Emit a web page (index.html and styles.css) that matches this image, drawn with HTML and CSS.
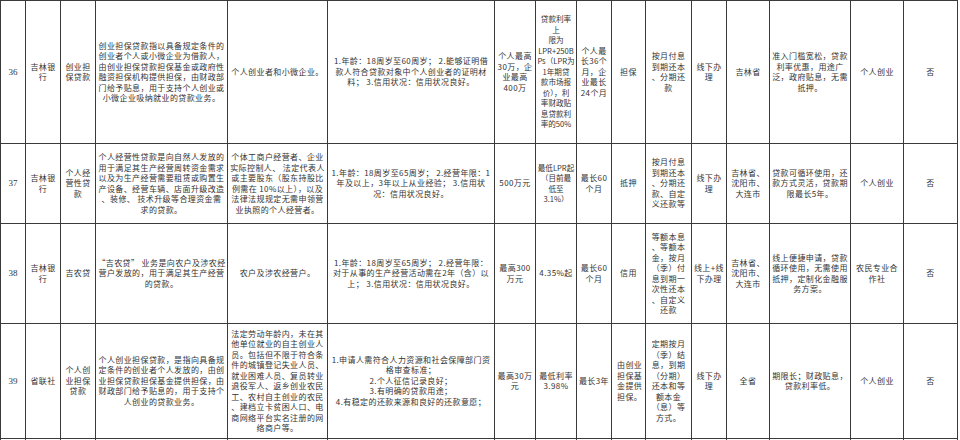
FILE: index.html
```html
<!DOCTYPE html>
<html lang="zh-CN">
<head>
<meta charset="utf-8">
<title>贷款产品表</title>
<link rel="stylesheet" href="styles.css">
</head>
<body>
<table class="loans">
<colgroup>
<col class="c1"><col class="c2"><col class="c3"><col class="c4"><col class="c5"><col class="c6"><col class="c7"><col class="c8"><col class="c9"><col class="c10"><col class="c11"><col class="c12"><col class="c13"><col class="c14"><col class="c15"><col class="c16">
</colgroup>
<tbody>
<tr class="r36">
<td class="num">36</td>
<td>吉林银<br>行</td>
<td>创业担<br>保贷款</td>
<td>创业担保贷款指以具备规定条件的<br>创业者个人或小微企业为借款人，<br>由创业担保贷款担保基金或政府性<br>融资担保机构提供担保，由财政部<br>门给予贴息，用于支持个人创业或<br>小微企业吸纳就业的贷款业务。</td>
<td>个人创业者和小微企业。</td>
<td>1.年龄：18周岁至60周岁； 2.能够证明借<br>款人符合贷款对象中个人创业者的证明材<br>料； 3.信用状况：信用状况良好。</td>
<td>个人最高<br>30万，企<br>业最高<br>400万</td>
<td class="tight">贷款利率<br>上<br>限为<br>LPR+250B<br>Ps（LPR为<br>1年期贷<br>款市场报<br>价），利<br>率财政贴<br>息贷款利<br>率的50%</td>
<td>个人最<br>长36个<br>月，企<br>业最长<br>24个月</td>
<td>担保</td>
<td>按月付息<br>到期还本<br>、分期还<br>款</td>
<td>线下办<br>理</td>
<td>吉林省</td>
<td>准入门槛宽松，贷款<br>利率优惠，用途广<br>泛，政府贴息，无需<br>抵押。</td>
<td>个人创业</td>
<td>否</td>
</tr>
<tr class="r37">
<td class="num">37</td>
<td>吉林银<br>行</td>
<td>个人经<br>营性贷<br>款</td>
<td>个人经营性贷款是向自然人发放的<br>用于满足其生产经营周转资金需求<br>以及为生产经营需要租赁或购置生<br>产设备、经营车辆、店面升级改造<br>、装修、 技术升级等合理资金需<br>求的贷款。</td>
<td>个体工商户经营者、企业<br>实际控制人、 法定代表人<br>或主要股东（股东持股比<br>例需在 10%以上），以及<br>法律法规规定无需申领营<br>业执照的个人经营者。</td>
<td>1.年龄：18周岁至65周岁； 2.经营年限：1<br>年及以上，3年以上从业经验； 3.信用状<br>况：信用状况良好。</td>
<td>500万元</td>
<td class="tight">最低LPR起<br>（目前最<br>低至<br>3.1%）</td>
<td>最长60<br>个月</td>
<td>抵押</td>
<td>按月付息<br>到期还本<br>、分期还<br>款、自定<br>义还款等</td>
<td>线下办<br>理</td>
<td>吉林省、<br>沈阳市、<br>大连市</td>
<td>贷款可循环使用，还<br>款方式灵活，贷款期<br>限最长5年。</td>
<td>个人创业</td>
<td>否</td>
</tr>
<tr class="r38">
<td class="num">38</td>
<td>吉林银<br>行</td>
<td>吉农贷</td>
<td>“吉农贷” 业务是向农户及涉农经<br>营户发放的，用于满足其生产经营<br>的贷款。</td>
<td>农户及涉农经营户。</td>
<td>1.年龄：18周岁至65周岁； 2.经营年限：<br>对于从事的生产经营活动需在2年（含）以<br>上； 3.信用状况：信用状况良好。</td>
<td>最高300<br>万元</td>
<td>4.35%起</td>
<td>最长60<br>个月</td>
<td>信用</td>
<td>等额本息<br>、等额本<br>金，按月<br>（季）付<br>息到期一<br>次性还本<br>、自定义<br>还款</td>
<td>线上+线<br>下办理</td>
<td>吉林省、<br>沈阳市、<br>大连市</td>
<td>线上便捷申请，贷款<br>循环使用，无需使用<br>抵押，定制化金融服<br>务方案。</td>
<td>农民专业合<br>作社</td>
<td>否</td>
</tr>
<tr class="r39">
<td class="num">39</td>
<td>省联社</td>
<td>个人创<br>业担保<br>贷款</td>
<td>个人创业担保贷款，是指向具备规<br>定条件的创业者个人发放的，由创<br>业担保贷款担保基金提供担保，由<br>财政部门给予贴息的，用于支持个<br>人创业的贷款业务。</td>
<td>法定劳动年龄内，未在其<br>他单位就业的自主创业人<br>员。包括但不限于符合条<br>件的城镇登记失业人员、<br>就业困难人员、复员转业<br>退役军人、返乡创业农民<br>工、农村自主创业的农民<br>、建档立卡贫困人口、电<br>商网络平台实名注册的网<br>络商户等。</td>
<td>1.申请人需符合人力资源和社会保障部门资<br>格审查标准；<br>2.个人征信记录良好；<br>3.有明确的贷款用途；<br>4.有稳定的还款来源和良好的还款意愿；</td>
<td>最高30万<br>元</td>
<td>最低利率<br>3.98%</td>
<td>最长3年</td>
<td class="left">由创业<br>担保基<br>金提供<br>担保。</td>
<td>定期按月<br>（季）结<br>息，到期<br>（分期）<br>还本和等<br>额本金<br>（息）等<br>方式。</td>
<td>线下办<br>理</td>
<td>全省</td>
<td>期限长；财政贴息，<br>贷款利率低。</td>
<td>个人创业</td>
<td>否</td>
</tr>
<tr class="r40">
<td></td><td></td><td></td><td></td><td></td><td></td><td></td><td></td><td></td><td></td><td></td><td></td><td></td><td></td><td></td><td></td>
</tr>
</tbody>
</table>
</body>
</html>
```
FILE: styles.css
```css
html, body {
  margin: 0;
  padding: 0;
  background: #ffffff;
}
body {
  height: 440px;
  overflow: hidden;
}
.loans {
  border-collapse: collapse;
  table-layout: fixed;
  width: 957px;
  font-family: "Noto Sans CJK SC", "Noto Sans", sans-serif;
  font-size: 8px;
  line-height: 10.5px;
  letter-spacing: 0.4px;
  color: #333333;
}
.loans td {
  border: 1px solid #3a3a3a;
  padding: 0 1px;
  text-align: center;
  vertical-align: middle;
  white-space: nowrap;
  overflow: hidden;
}
.loans td.num {
  font-family: "Liberation Serif", serif;
  font-size: 9px;
  letter-spacing: 0;
}
.loans td.tight {
  padding: 0;
  letter-spacing: 0;
  font-size: 7.6px;
}
.loans td.left {
  text-align: left;
  padding-left: 5px;
}
.c1 { width: 25px; }
.c2 { width: 35px; }
.c3 { width: 35px; }
.c4 { width: 132px; }
.c5 { width: 100px; }
.c6 { width: 167px; }
.c7 { width: 41px; }
.c8 { width: 41px; }
.c9 { width: 35px; }
.c10 { width: 34px; }
.c11 { width: 46px; }
.c12 { width: 35px; }
.c13 { width: 43px; }
.c14 { width: 81px; }
.c15 { width: 53px; }
.c16 { width: 54px; }
.r36 td { height: 142px; }
.r37 td { height: 79px; }
.r38 td { height: 99px; }
.r39 td { height: 114px; }
.r40 td { height: 30px; }
```
